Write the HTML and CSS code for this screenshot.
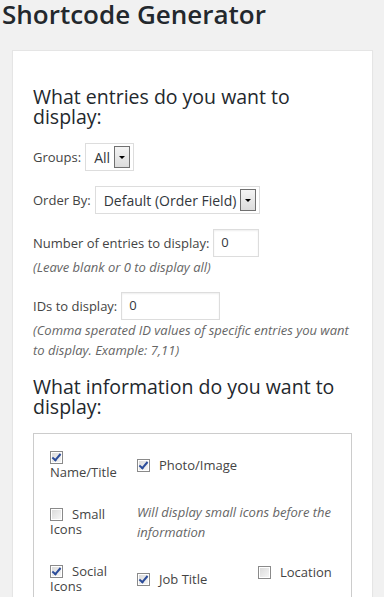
FILE: index.html
```html
<!DOCTYPE html>
<html lang="en">
<head>
  <meta charset="UTF-8" />
  <meta name="viewport" content="width=device-width, initial-scale=1.0"/>
  <title>Shortcode Generator</title>
  <link rel="stylesheet" href="styles.css">
</head>
<body>
  <h1 class="page-title">Shortcode Generator</h1>

  <div class="panel">
    <h3>What entries do you want to display:</h3>

    <div class="field">
      <label>Groups:</label>
      <span class="select">All<span class="select-btn"></span></span>
    </div>

    <div class="field">
      <label>Order By:</label>
      <span class="select">Default (Order Field)<span class="select-btn"></span></span>
    </div>

    <div class="field">
      <label>Number of entries to display:</label>
      <span class="text-input num">0</span>
    </div>
    <p class="hint">(Leave blank or 0 to display all)</p>

    <div class="field">
      <label>IDs to display:</label>
      <span class="text-input ids">0</span>
    </div>
    <p class="hint">(Comma sperated ID values of specific entries you want to display. Example: 7,11)</p>

    <h3 class="second">What information do you want to display:</h3>

    <div class="info-box">
      <div class="opt stacked"><span class="cb checked"></span><br>Name/Title</div>
      <div class="opt"><span class="cb checked"></span>Photo/Image</div>
      <div></div>

      <div class="opt"><span class="cb"></span>Small Icons</div>
      <div class="note">Will display small icons before the information</div>

      <div class="opt"><span class="cb checked"></span>Social Icons</div>
      <div class="opt"><span class="cb checked"></span>Job Title</div>
      <div class="opt top"><span class="cb"></span>Location</div>
    </div>
  </div>
</body>
</html>
```

FILE: styles.css
```css
body {
  font-family: 'Open Sans', sans-serif;
  font-size: 13px;
  color: #444;
  background-color: #f1f1f1;
  margin: 0;
  padding: 0;
}

.page-title {
  font-size: 26px;
  font-weight: 600;
  line-height: 36px;
  color: #23282d;
  margin: -4px 0 0 2px;
  padding: 0;
}

.panel {
  background-color: #fff;
  border: 1px solid #e5e5e5;
  margin: 18px 11px 0 12px;
  padding: 36px 20px 0 20px;
  box-shadow: 0 1px 1px rgba(0,0,0,0.04);
}

h3 {
  font-size: 19.5px;
  font-weight: 400;
  line-height: 20px;
  color: #23282d;
  margin: 0 0 16px 0;
}

h3.second {
  margin-top: 17px;
  margin-bottom: 16px;
}

.field {
  display: flex;
  align-items: center;
  gap: 4px;
  height: 28px;
  margin-top: 15px;
}

.field:first-of-type {
  margin-top: 0;
}

.select {
  display: flex;
  align-items: center;
  height: 26px;
  border: 1px solid #ddd;
  padding: 0 3px 0 8px;
  font-size: 14px;
  color: #32373c;
  gap: 4px;
}

.select-btn {
  width: 14px;
  height: 20px;
  border: 1px solid #707070;
  background: linear-gradient(#f4f4f4, #dcdcdc);
  position: relative;
}

.select-btn::after {
  content: "";
  position: absolute;
  left: 4px;
  top: 9px;
  border-left: 3px solid transparent;
  border-right: 3px solid transparent;
  border-top: 3px solid #000;
}

.text-input {
  display: block;
  box-sizing: border-box;
  height: 28px;
  border: 1px solid #ddd;
  box-shadow: inset 0 1px 2px rgba(0,0,0,0.07);
  padding: 3px 7px;
  color: #32373c;
  line-height: 18px;
}

.text-input.num {
  width: 46px;
}

.text-input.ids {
  width: 99px;
}

.hint {
  font-style: italic;
  color: #666;
  line-height: 20px;
  margin: 0 0 15px 0;
}

.info-box {
  border: 1px solid #ccc;
  display: grid;
  grid-template-columns: 70px 104px 1fr;
  grid-auto-rows: 40px;
  column-gap: 17px;
  row-gap: 17px;
  padding: 11px 16px 20px 16px;
  margin-bottom: 20px;
}

.opt {
  align-self: center;
  line-height: 15px;
}

.opt.top {
  align-self: start;
  margin-top: 6px;
}

.note {
  grid-column: span 2;
  align-self: center;
  font-style: italic;
  color: #666;
  line-height: 20px;
}

.cb {
  display: inline-block;
  box-sizing: border-box;
  width: 13px;
  height: 13px;
  border: 1px solid #8a8a8a;
  background: linear-gradient(135deg, #d8d8d8, #f8f8f8);
  box-shadow: inset 0 0 0 1px #fff;
  vertical-align: -2px;
  margin-right: 9px;
  position: relative;
}

.cb.checked::after {
  content: "";
  position: absolute;
  left: 3px;
  top: 0px;
  width: 3px;
  height: 7px;
  border-right: 2px solid #2b4c9a;
  border-bottom: 2px solid #2b4c9a;
  transform: rotate(40deg);
}

.stacked .cb {
  margin-right: 0;
}
```
